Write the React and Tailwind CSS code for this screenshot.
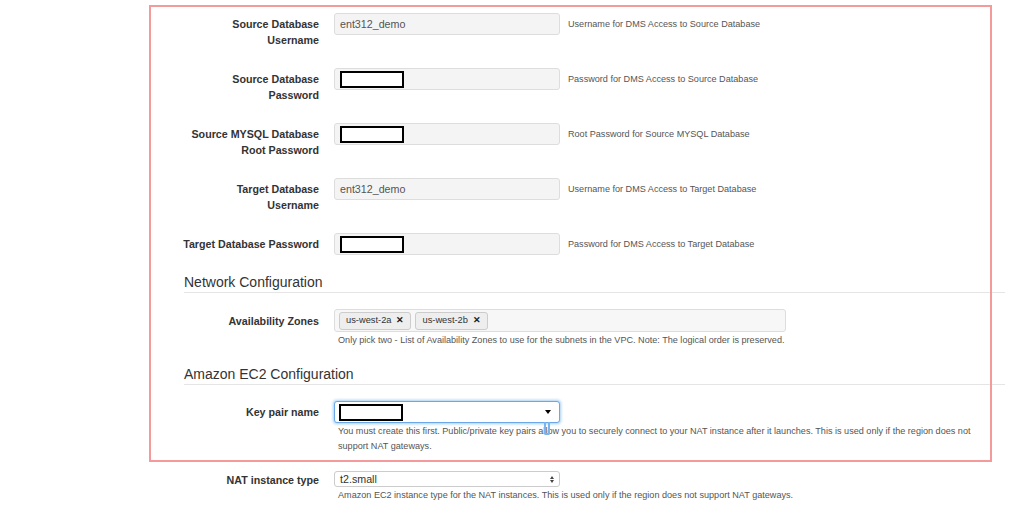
import React from 'react';

const font = { fontFamily: '"Liberation Sans", Arial, Helvetica, sans-serif' };

function Redacted() {
    return <span className="block h-[17px] w-[64px] border-2 border-black bg-white" />;
}

function Label({ children, pt = 'pt-[3px]' }) {
    return (
        <div className={`w-[160px] shrink-0 ${pt} text-right text-[10.7px] font-bold leading-[16px] text-[#333]`}>
            {children}
        </div>
    );
}

function TextRow({ label, value, redacted, help, tall }) {
    return (
        <div className={`flex ${tall ? 'h-[55px]' : 'h-[22px]'}`}>
            <Label>{label}</Label>
            <div className="ml-[15px] flex h-[22px] w-[226px] shrink-0 items-center rounded-[3px] border border-[#ddd] bg-[#f4f4f4] px-[5px] text-[10.7px] text-[#555]">
                {redacted ? <Redacted /> : value}
            </div>
            <div className="ml-[8px] pt-[4px] text-[9.1px] leading-[14px] text-[#555]">{help}</div>
        </div>
    );
}

function Heading({ children, className }) {
    return (
        <div className={`ml-[25px] border-b border-[#e5e5e5] text-[14px] leading-[20px] text-[#333] ${className}`}>
            {children}
        </div>
    );
}

function Tag({ children }) {
    return (
        <span className="flex h-[18px] items-center gap-[5px] rounded-[3px] border border-[#ccc] bg-[#eee] px-[6px] text-[9.3px] text-[#333]">
            {children}
            <span className="text-[9px] font-bold leading-none text-[#222]">✕</span>
        </span>
    );
}

export default function App() {
    return (
        <div className="relative h-[524px] w-[1024px] overflow-hidden bg-white" style={font}>
            <div className="ml-[159px] w-[846px] pt-[13px]">
                <TextRow tall label={<>Source Database<br />Username</>} value="ent312_demo" help="Username for DMS Access to Source Database" />
                <TextRow tall label={<>Source Database<br />Password</>} redacted help="Password for DMS Access to Source Database" />
                <TextRow tall label={<>Source MYSQL Database<br />Root Password</>} redacted help="Root Password for Source MYSQL Database" />
                <TextRow tall label={<>Target Database<br />Username</>} value="ent312_demo" help="Username for DMS Access to Target Database" />
                <TextRow label="Target Database Password" redacted help="Password for DMS Access to Target Database" />

                <Heading className="mt-[17px]">Network Configuration</Heading>

                <div className="mt-[16px] flex">
                    <Label pt="pt-[4px]">Availability Zones</Label>
                    <div className="ml-[15px]">
                        <div className="flex h-[23px] w-[452px] items-center gap-[4px] rounded-[3px] border border-[#ddd] bg-[#f7f7f7] px-[4px]">
                            <Tag>us-west-2a</Tag>
                            <Tag>us-west-2b</Tag>
                        </div>
                        <div className="mt-[1px] pl-[4px] text-[9.1px] leading-[14px] text-[#555]">
                            Only pick two - List of Availability Zones to use for the subnets in the VPC. Note: The logical order is preserved.
                        </div>
                    </div>
                </div>

                <Heading className="mt-[17px]">Amazon EC2 Configuration</Heading>

                <div className="mt-[16px] flex">
                    <Label>Key pair name</Label>
                    <div className="relative ml-[15px]">
                        <div className="flex h-[22px] w-[226px] items-center justify-between rounded-[3px] border border-[#6aa8ea] bg-white pl-[4px] pr-[8px] shadow-[0_0_3px_1px_rgba(102,175,233,0.6)]">
                            <Redacted />
                            <span className="h-0 w-0 border-x-[3px] border-t-[4px] border-x-transparent border-t-black" />
                        </div>
                        <span className="absolute left-[210px] top-[21px] h-[13px] w-[6px] rounded-b-[2px] border-2 border-t-0 border-[#7ab4ee]" />
                        <div className="mt-[1px] whitespace-nowrap pl-[4px] text-[9.1px] leading-[15px] text-[#555]">
                            You must create this first. Public/private key pairs allow you to securely connect to your NAT instance after it launches. This is used only if the region does not
                            <br />
                            support NAT gateways.
                        </div>
                    </div>
                </div>

                <div className="mt-[15px] flex">
                    <Label>NAT instance type</Label>
                    <div className="ml-[15px]">
                        <div className="mt-[2px] flex h-[16px] w-[226px] items-center justify-between rounded-[3px] border border-[#ccc] bg-white pl-[5px] pr-[5px] text-[10.7px] leading-none text-[#333]">
                            t2.small
                            <span className="flex flex-col items-center gap-[1px]">
                                <span className="h-0 w-0 border-x-[2.5px] border-b-[3px] border-x-transparent border-b-[#444]" />
                                <span className="h-0 w-0 border-x-[2.5px] border-t-[3px] border-x-transparent border-t-[#444]" />
                            </span>
                        </div>
                        <div className="mt-[1px] pl-[4px] text-[9.1px] leading-[14px] text-[#555]">
                            Amazon EC2 instance type for the NAT instances. This is used only if the region does not support NAT gateways.
                        </div>
                    </div>
                </div>
            </div>

            <div className="pointer-events-none absolute left-[149px] top-[5px] h-[457px] w-[843px] border-2 border-[#f49a9a]" />
        </div>
    );
}
